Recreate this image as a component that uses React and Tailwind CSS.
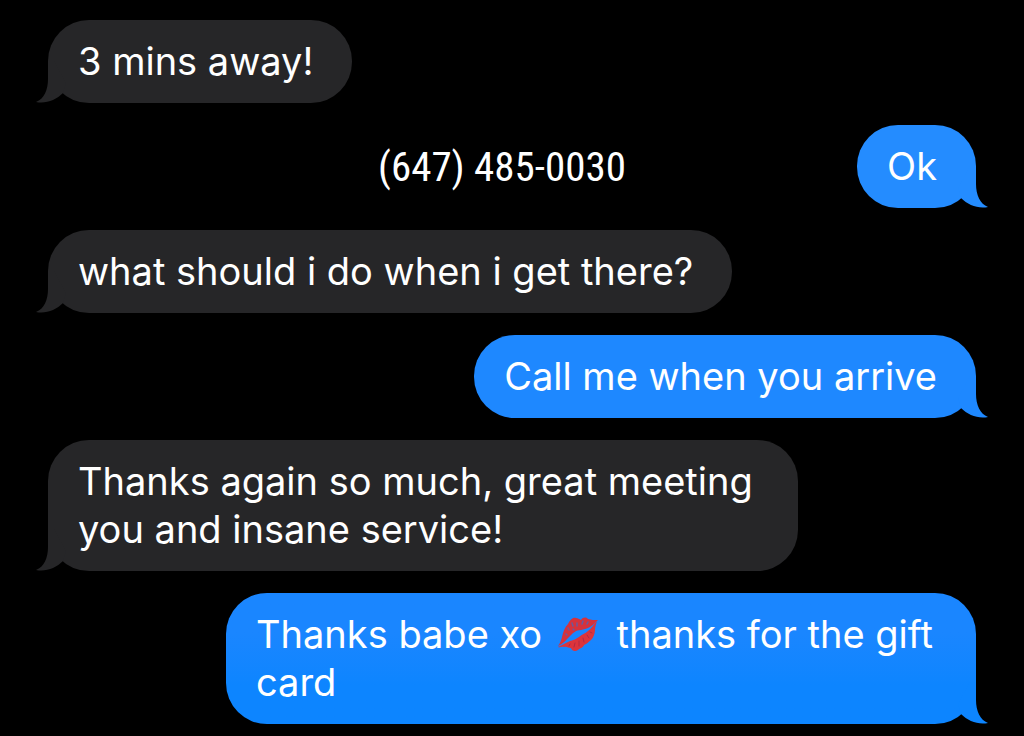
import React from "react";

const messages = [
  { from: "them", text: "3 mins away!" },
  { from: "me", text: "Ok", color: "bg-[#248cff] text-[#248cff]", label: "(647) 485-0030" },
  { from: "them", text: "what should i do when i get there?" },
  { from: "me", text: "Call me when you arrive", color: "bg-[#1e88ff] text-[#1e88ff]" },
  { from: "them", text: "Thanks again so much, great meeting you and insane service!" },
  {
    from: "me",
    text: "Thanks babe xo",
    kiss: true,
    after: "thanks for the gift card",
    color: "bg-linear-to-b from-[#1a86ff] from-30% to-[#0d85ff] to-70% text-[#0d85ff]",
  },
];

function Kiss() {
  return (
    <svg viewBox="0 0 41 38" role="img" aria-label="kiss mark" className="inline-block w-[41px] h-[38px] ml-1 mr-2 align-[-5px]">
      <path
        fill="#d6323c"
        d="M1 31 C3 28 4 26 5 22 C6 17 8 12 11 9 C13 5 16 2 19 3 C21 3 22 4 24 5 C26 2 29 2 31 4 C34 5 37 5 41 5 C38 8 36 10 33 12 C29 14 27 14 24 15 C19 15 16 18 13 21 C10 24 6 29 1 31 Z"
      />
      <path
        fill="#dc343c"
        d="M1 32 C5 30 9 28 13 26 C17 25 19 24 22 22 C25 19 28 19 31 16 C34 14 37 9 40 6 C39 9 38 12 38 15 C38 19 36 23 34 25 C31 27 30 29 27 30 C26 33 23 33 21 35 C18 37 15 36 14 33 C11 33 10 31 7 32 C5 31 3 33 1 32 Z"
      />
      <g fill="none" stroke="#6a5a9e" strokeWidth="1.5" strokeLinecap="round">
        <path d="M11 13 L12 15 M15 8 L16 11 M20 8 L20 11 M26 6 L25 9 M9 19 L10 20 M16 14 L17 15 M31 7 L30 9" />
      </g>
      <g fill="none" stroke="#b02a45" strokeWidth="1" strokeLinecap="round">
        <path d="M12 31 L13 29 M17 32 L18 28 M22 31 L22 26 M27 27 L26 23 M32 23 L30 20 M35 18 L33 17" />
      </g>
    </svg>
  );
}

function Tail({ mine }) {
  return (
    <svg
      viewBox="0 0 40 42"
      aria-hidden="true"
      className={mine ? "absolute bottom-0 -right-3 w-10 h-[42px] -scale-x-100" : "absolute bottom-0 -left-3 w-10 h-[42px]"}
    >
      <path fill="currentColor" d="M12 0 V18 C12 29 8 38 0 41 C10 43 20 39 27 32 L30 22 L18 0 Z" />
    </svg>
  );
}

function Bubble({ message }) {
  const mine = message.from === "me";
  return (
    <div
      className={`relative w-fit max-w-[750px] rounded-[41px] pl-[30px] pr-[39px] pt-[17px] pb-[18px] ${
        mine ? message.color : "bg-[#262628] text-[#262628]"
      }`}
    >
      <Tail mine={mine} />
      <p className="relative text-[38px] leading-[48px] text-white">
        {message.text}
        {message.kiss && <> <Kiss /> </>}
        {message.after}
      </p>
    </div>
  );
}

export default function App() {
  return (
    <main className="min-h-screen bg-black px-12 pt-5 pb-3 font-['Inter',sans-serif]">
      <div className="flex flex-col gap-[22px]">
        {messages.map((m) => (
          <div key={m.text} className="grid grid-cols-[1fr_auto_1fr] items-center">
            {m.label ? (
              <>
                <h1 className="col-start-2 pr-5 text-[41px] leading-[48px] text-white font-['Roboto_Condensed','Noto_Sans_CJK_SC',sans-serif]">
                  {m.label}
                </h1>
                <div className="flex justify-end">
                  <Bubble message={m} />
                </div>
              </>
            ) : (
              <div className={m.from === "me" ? "col-span-3 flex justify-end" : "col-span-3 flex"}>
                <Bubble message={m} />
              </div>
            )}
          </div>
        ))}
      </div>
    </main>
  );
}
